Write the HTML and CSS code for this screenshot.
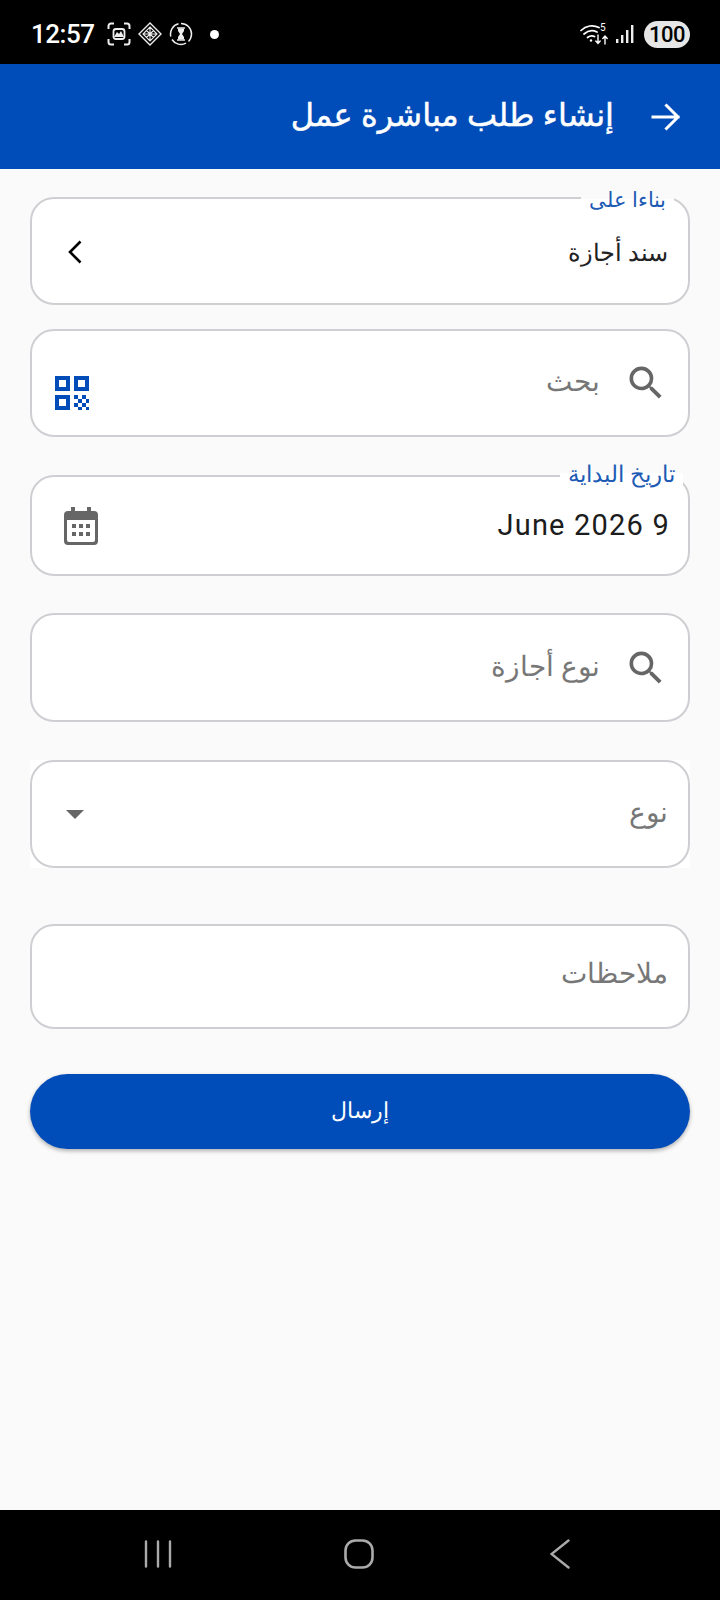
FILE: index.html
```html
<!DOCTYPE html>
<html lang="ar" dir="rtl">
<head>
    <meta charset="UTF-8">
    <title>إنشاء طلب مباشرة عمل</title>
    <link rel="stylesheet" href="styles.css">
</head>
<body>
    <div class="status-bar" dir="ltr">
        <span class="clock">12:57</span>
        <svg class="status-icon" viewBox="0 0 24 24" fill="none" stroke="#eee" stroke-width="2">
            <path d="M1.500 7V4A2.500 2.500 0 0 1 4 1.500h3M17 1.500h3A2.500 2.500 0 0 1 22.500 4v3M22.500 17v3a2.500 2.500 0 0 1-2.500 2.500h-3M7 22.500H4A2.500 2.500 0 0 1 1.500 20v-3"/>
            <rect x="6.500" y="7" width="11" height="10" rx="2.500" stroke-width="1.800"/>
            <path d="M7 15l3-5 2 2 2-3 3 6z" fill="#eee" stroke="none"/>
        </svg>
        <svg class="status-icon" viewBox="0 0 24 24" fill="none" stroke="#eee" stroke-width="1.400">
            <path d="M12 1l11 11-11 11L1 12z"/>
            <path d="M12 5l7 7-7 7-7-7zM8.500 8.500l7 7M15.500 8.500l-7 7M12 5v14M5 12h14" stroke-width="1.100"/>
        </svg>
        <svg class="status-icon" viewBox="0 0 24 24" fill="none" stroke="#eee" stroke-width="1.500">
            <path d="M12 1.500a10.500 10.500 0 0 1 10.500 10.500 10.500 10.500 0 0 1-3 7.400M17 21.200A10.500 10.500 0 0 1 3 17.500M1.800 14.500A10.500 10.500 0 0 1 9.500 1.800"/>
            <path d="M8 6h8M8 18h8" stroke-width="1.700"/>
            <path d="M9 6.500h6v2.500l-2 3 2 3v2.500H9V15l2-3-2-3z" fill="#eee" stroke="none"/>
        </svg>
        <span class="status-dot"></span>
        <span class="status-spacer"></span>
        <svg class="wifi-icon" viewBox="0 0 30 24" fill="none" stroke="#fff" stroke-width="1.700" stroke-linecap="round">
            <path d="M1 8.500C6 3.500 13 2.500 19 5.500M4 12c4-3.500 9-4 13-2M7.500 15.500c2-1.500 5-2 7-1"/>
            <circle cx="11" cy="18.500" r="1.200" fill="#fff" stroke="none"/>
            <path d="M18 13v8M15.800 19l2.200 2.500 2.200-2.500M25 22v-8M22.800 16.500l2.200-2.500 2.200 2.500" stroke-width="1.400"/>
            <text x="20" y="9" class="wifi-five">5</text>
        </svg>
        <svg class="signal-icon" viewBox="0 0 20 20" fill="#eee">
            <rect x="1" y="15" width="2.400" height="4"/>
            <rect x="6" y="11" width="2.400" height="8"/>
            <rect x="11" y="6" width="2.400" height="13"/>
            <rect x="16" y="1" width="2.400" height="18"/>
        </svg>
        <span class="battery">100</span>
    </div>

    <header class="app-bar">
        <svg class="back-arrow" viewBox="0 0 32 32" fill="none" stroke="#fff" stroke-width="3" stroke-linecap="square">
            <path d="M3 16h25M16.500 4.500L28 16 16.500 27.500"/>
        </svg>
        <h1 class="app-title">إنشاء طلب مباشرة عمل</h1>
    </header>

    <main class="form">
        <div class="field">
            <label class="field-label label-based-on">بناءا على</label>
            <span class="field-value">سند أجازة</span>
            <svg class="chevron" viewBox="0 0 16 24" fill="none" stroke="#000" stroke-width="2.600">
                <path d="M13.500 1.500L3 12l10.500 10.500"/>
            </svg>
        </div>

        <div class="field field-search">
            <svg class="search-icon" viewBox="0 0 24 24" fill="#666">
                <path d="M15.500 14h-.79l-.28-.27A6.470 6.470 0 0 0 16 9.500 6.500 6.500 0 1 0 9.500 16c1.610 0 3.090-.59 4.230-1.570l.27.28v.79l5 4.990L20.490 19l-4.990-5zm-6 0C7.010 14 5 11.990 5 9.500S7.010 5 9.500 5 14 7.010 14 9.500 11.990 14 9.500 14z"/>
            </svg>
            <span class="field-hint">بحث</span>
            <svg class="qr-icon" viewBox="0 0 34 34" fill="#004cb8">
                <path fill-rule="evenodd" d="M0 0h15v15H0zM4 4v7h7V4zM19 0h15v15H19zM23 4v7h7V4zM0 19h15v15H0zM4 23v7h7v-7z"/>
                <path d="M19 19h4v4h-4zM27 19h4v4h-4zM23 23h4v4h-4zM31 23h3v4h-3zM19 27h4v4h-4zM27 27h4v4h-4zM23 31h4v3h-4zM31 31h3v3h-3z"/>
            </svg>
        </div>

        <div class="field field-date">
            <label class="field-label label-date">تاريخ البداية</label>
            <span class="date-value">9 June 2026</span>
            <svg class="calendar-icon" viewBox="0 0 34 38" fill="#666">
                <path fill-rule="evenodd" d="M7 0h4v4h12V0h4v4h3a4 4 0 0 1 4 4v26a4 4 0 0 1-4 4H4a4 4 0 0 1-4-4V8a4 4 0 0 1 4-4h3zM3 13v20a2 2 0 0 0 2 2h24a2 2 0 0 0 2-2V13z"/>
                <path d="M8 17h4v4H8zM15 17h4v4h-4zM22 17h4v4h-4zM8 25h4v4H8zM15 25h4v4h-4zM22 25h4v4h-4z"/>
            </svg>
        </div>

        <div class="field field-leave-type">
            <svg class="search-icon" viewBox="0 0 24 24" fill="#666">
                <path d="M15.500 14h-.79l-.28-.27A6.470 6.470 0 0 0 16 9.500 6.500 6.500 0 1 0 9.500 16c1.610 0 3.090-.59 4.230-1.570l.27.28v.79l5 4.990L20.490 19l-4.990-5zm-6 0C7.010 14 5 11.990 5 9.500S7.010 5 9.500 5 14 7.010 14 9.500 11.990 14 9.500 14z"/>
            </svg>
            <span class="field-hint">نوع أجازة</span>
        </div>

        <div class="kind-box">
            <div class="field">
                <span class="field-hint">نوع</span>
                <span class="dropdown-arrow"></span>
            </div>
        </div>

        <div class="field field-notes">
            <span class="field-hint">ملاحظات</span>
        </div>

        <button class="submit-button">إرسال</button>
    </main>

    <nav class="nav-bar" dir="ltr">
        <svg class="nav-recents" viewBox="0 0 28 28" fill="none" stroke="#aaa" stroke-width="2.400" stroke-linecap="round">
            <path d="M2 1.500v25M14 1.500v25M26 1.500v25"/>
        </svg>
        <svg class="nav-home" viewBox="0 0 30 30" fill="none" stroke="#aaa" stroke-width="2.600">
            <rect x="1.500" y="1.500" width="27" height="27" rx="10"/>
        </svg>
        <svg class="nav-back" viewBox="0 0 20 30" fill="none" stroke="#aaa" stroke-width="2.400" stroke-linecap="round">
            <path d="M18.500 1.500L1.500 15l17 13.500"/>
        </svg>
    </nav>
</body>
</html>
```

FILE: styles.css
```css
html, body {
    margin: 0;
    padding: 0;
    width: 720px;
    height: 1600px;
}

body {
    display: flex;
    flex-direction: column;
    background: #FAFAFA;
    font-family: 'Noto Sans', 'DejaVu Sans', sans-serif;
    overflow: hidden;
}

.status-bar {
    display: flex;
    align-items: center;
    flex: none;
    height: 64px;
    padding: 4px 30px 0 31px;
    box-sizing: border-box;
    background: #000000;
    color: #FFFFFF;
}

.clock {
    margin-right: 13px;
    font-family: 'Roboto', sans-serif;
    font-size: 26px;
    font-weight: 500;
    letter-spacing: -0.5px;
}

.status-icon {
    width: 24px;
    height: 24px;
    margin-right: 7px;
}

.status-dot {
    width: 9px;
    height: 9px;
    margin-left: 10px;
    border-radius: 50%;
    background: #FFFFFF;
}

.status-spacer {
    flex: 1;
}

.wifi-icon {
    width: 30px;
    height: 24px;
    margin-right: 5px;
}

.wifi-five {
    font-family: 'Roboto', sans-serif;
    font-size: 10px;
    fill: #FFFFFF;
    stroke: none;
}

.signal-icon {
    width: 20px;
    height: 20px;
    margin-right: 9px;
}

.battery {
    width: 46px;
    height: 27px;
    border-radius: 14px;
    background: #E6E6E6;
    color: #000000;
    font-family: 'Roboto', sans-serif;
    font-size: 22px;
    font-weight: 500;
    letter-spacing: -0.5px;
    line-height: 27px;
    text-align: center;
}

.app-bar {
    display: flex;
    align-items: center;
    gap: 36px;
    flex: none;
    height: 105px;
    padding: 0 38px 0 0;
    box-sizing: border-box;
    background: #004CB8;
}

.back-arrow {
    width: 32px;
    height: 32px;
}

.app-title {
    margin: 0 0 6px;
    color: #FFFFFF;
    font-size: 32px;
    font-weight: 500;
    -webkit-text-stroke: 0.5px #FFFFFF;
}

.form {
    display: flex;
    flex-direction: column;
    flex: 1;
    padding: 28px 30px 0;
}

.field {
    position: relative;
    display: flex;
    align-items: center;
    box-sizing: border-box;
    height: 108px;
    padding: 0 20px 0 24px;
    background: #FFFFFF;
    border: 2px solid #CFCFD3;
    border-radius: 24px;
}

.field-search {
    margin-top: 24px;
}

.field-date {
    height: 101px;
    margin-top: 38px;
}

.field-leave-type {
    height: 109px;
    margin-top: 37px;
}

.kind-box {
    margin-top: 38px;
    background: #FFFFFF;
}

.field-notes {
    height: 105px;
    margin-top: 56px;
}

.field-label {
    position: absolute;
    padding: 0 8px;
    background: linear-gradient(#FAFAFA 50%, #FFFFFF 50%);
    color: #1D5BB5;
    font-weight: 300;
    line-height: 28px;
}

.label-based-on {
    top: -14px;
    right: 14px;
    font-size: 21px;
}

.label-date {
    top: -18px;
    right: 5px;
    font-size: 23px;
}

.field-value {
    flex: 1;
    color: #222222;
    font-size: 24px;
    font-weight: 300;
}

.field-hint {
    flex: 1;
    padding-bottom: 6px;
    color: #777777;
    font-size: 28px;
    font-weight: 300;
}

.field-notes .field-hint {
    padding-bottom: 9px;
}

.date-value {
    flex: 1;
    margin: 0 -2px 2px 0;
    color: #1C1C1C;
    font-family: 'Roboto', sans-serif;
    font-size: 29px;
    letter-spacing: 1.2px;
}

.chevron {
    width: 16px;
    height: 24px;
    margin: 2px 0 0 11px;
}

.search-icon {
    flex: none;
    width: 44px;
    height: 44px;
    margin-left: 24px;
}

.qr-icon {
    position: absolute;
    left: 23px;
    top: 45px;
    width: 34px;
    height: 34px;
}

.calendar-icon {
    width: 34px;
    height: 38px;
    margin-left: 8px;
}

.dropdown-arrow {
    width: 0;
    height: 0;
    margin-left: 10px;
    border-top: 9px solid #666666;
    border-left: 9px solid transparent;
    border-right: 9px solid transparent;
}

.submit-button {
    height: 75px;
    margin-top: 45px;
    padding-bottom: 6px;
    border: none;
    border-radius: 38px;
    background: #004CB8;
    box-shadow: 0 2px 4px rgba(0, 0, 0, 0.3);
    color: #FFFFFF;
    font-family: inherit;
    font-size: 22px;
    font-weight: 300;
}

.nav-bar {
    flex: none;
    display: flex;
    align-items: center;
    justify-content: space-between;
    height: 90px;
    padding: 0 150px 2px 144px;
    box-sizing: border-box;
    background: #000000;
}

.nav-recents {
    width: 28px;
    height: 28px;
}

.nav-home {
    width: 30px;
    height: 30px;
    margin-right: 4px;
}

.nav-back {
    width: 20px;
    height: 30px;
}
```
